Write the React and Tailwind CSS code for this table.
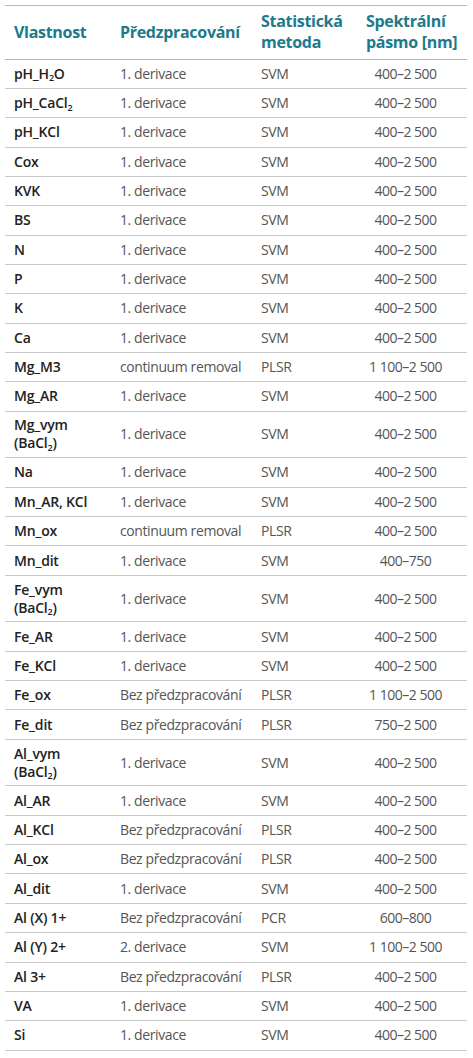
import React from "react";

const rows = [
  [<>pH_H<sub>2</sub>O</>, "1. derivace", "SVM", "400–2 500"],
  [<>pH_CaCl<sub>2</sub></>, "1. derivace", "SVM", "400–2 500"],
  ["pH_KCl", "1. derivace", "SVM", "400–2 500"],
  ["Cox", "1. derivace", "SVM", "400–2 500"],
  ["KVK", "1. derivace", "SVM", "400–2 500"],
  ["BS", "1. derivace", "SVM", "400–2 500"],
  ["N", "1. derivace", "SVM", "400–2 500"],
  ["P", "1. derivace", "SVM", "400–2 500"],
  ["K", "1. derivace", "SVM", "400–2 500"],
  ["Ca", "1. derivace", "SVM", "400–2 500"],
  ["Mg_M3", "continuum removal", "PLSR", "1 100–2 500"],
  ["Mg_AR", "1. derivace", "SVM", "400–2 500"],
  [<>Mg_vym<br />(BaCl<sub>2</sub>)</>, "1. derivace", "SVM", "400–2 500", true],
  ["Na", "1. derivace", "SVM", "400–2 500"],
  ["Mn_AR, KCl", "1. derivace", "SVM", "400–2 500"],
  ["Mn_ox", "continuum removal", "PLSR", "400–2 500"],
  ["Mn_dit", "1. derivace", "SVM", "400–750"],
  [<>Fe_vym<br />(BaCl<sub>2</sub>)</>, "1. derivace", "SVM", "400–2 500", true],
  ["Fe_AR", "1. derivace", "SVM", "400–2 500"],
  ["Fe_KCl", "1. derivace", "SVM", "400–2 500"],
  ["Fe_ox", "Bez předzpracování", "PLSR", "1 100–2 500"],
  ["Fe_dit", "Bez předzpracování", "PLSR", "750–2 500"],
  [<>Al_vym<br />(BaCl<sub>2</sub>)</>, "1. derivace", "SVM", "400–2 500", true],
  ["Al_AR", "1. derivace", "SVM", "400–2 500"],
  ["Al_KCl", "Bez předzpracování", "PLSR", "400–2 500"],
  ["Al_ox", "Bez předzpracování", "PLSR", "400–2 500"],
  ["Al_dit", "1. derivace", "SVM", "400–2 500"],
  ["Al (X) 1+", "Bez předzpracování", "PCR", "600–800"],
  ["Al (Y) 2+", "2. derivace", "SVM", "1 100–2 500"],
  ["Al 3+", "Bez předzpracování", "PLSR", "400–2 500"],
  ["VA", "1. derivace", "SVM", "400–2 500"],
  ["Si", "1. derivace", "SVM", "400–2 500"],
];

export default function App() {
  return (
    <div className="w-[473px] h-[1058px] bg-white pt-[5px] px-[5px]" style={{ fontFamily: '"Open Sans", "Noto Sans", sans-serif' }}>
      <div className="w-[462px] border-t-[1.5px] border-[#b8b8b8]">
        <div className="flex items-center h-[53.5px] border-b-[1.5px] border-[#b8b8b8] text-[#1b7a8b] font-bold text-[16px] leading-[21px] tracking-[-0.3px]">
          <div className="w-[115px] shrink-0 pl-[9px]">Vlastnost</div>
          <div className="w-[141px] shrink-0">Předzpracování</div>
          <div className="w-[105px] shrink-0">Statistická<br />metoda</div>
          <div className="flex-1 whitespace-nowrap">Spektrální<br />pásmo [nm]</div>
        </div>
        {rows.map((r, i) => (
          <div
            key={i}
            className={`flex items-center border-b border-[#c8c8c8] ${r[4] ? "h-[46.7px]" : "h-[29.35px]"} text-[14px] leading-[18px]`}
          >
            <div className="w-[115px] shrink-0 pl-[9px] font-semibold text-[#222] text-[14px] tracking-[-0.2px] [&_sub]:text-[9px] [&_sub]:bottom-[-0.3em]">{r[0]}</div>
            <div className="w-[141px] shrink-0 text-[#555] tracking-[-0.4px] whitespace-nowrap">{r[1]}</div>
            <div className="w-[105px] shrink-0 text-[#555] tracking-[-0.4px]">{r[2]}</div>
            <div className="flex-1 text-center pr-[22px] text-[#555] tracking-[-0.5px] whitespace-nowrap">{r[3]}</div>
          </div>
        ))}
      </div>
    </div>
  );
}
